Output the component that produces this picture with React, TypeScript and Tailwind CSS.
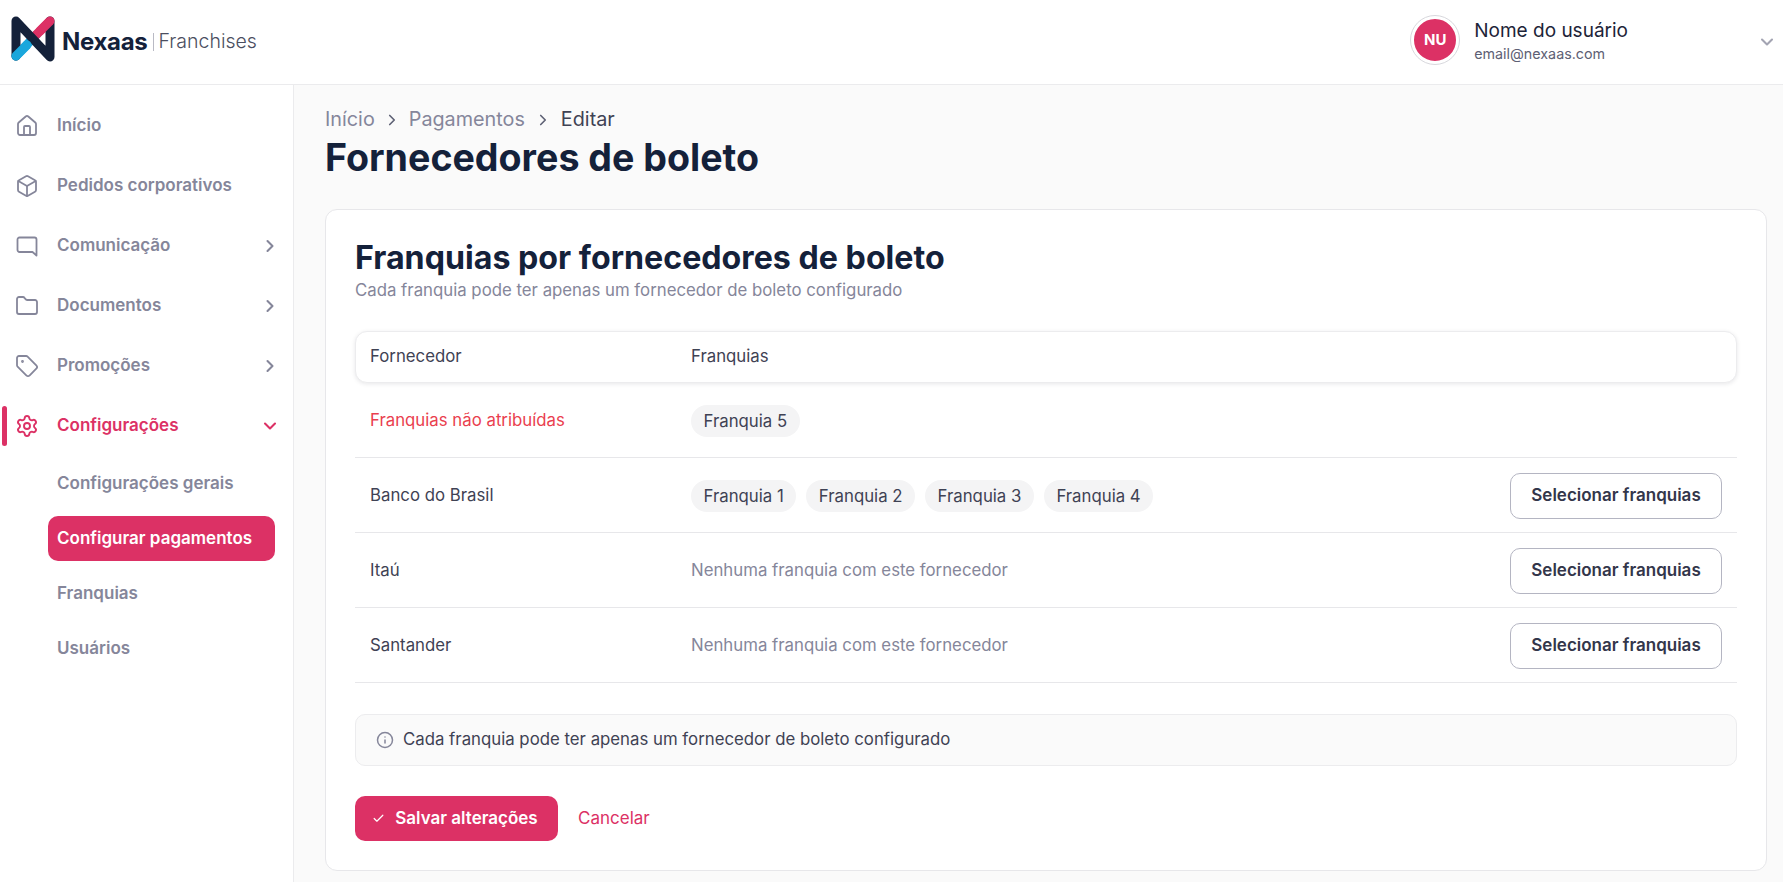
import { Box, Check, ChevronDown, ChevronRight, Folder, Home, Info, Settings, Tag } from "lucide-react";
import type { ReactNode } from "react";

function ChatIcon() {
  return (
    <svg width="24" height="24" viewBox="0 0 24 24" fill="none" stroke="currentColor" strokeWidth="1.8" strokeLinejoin="round">
      <path d="M4.5 3.5h15a2 2 0 0 1 2 2V21.5l-4-3.5h-13a2 2 0 0 1-2-2V5.5a2 2 0 0 1 2-2z" />
    </svg>
  );
}

const navItems = [
  { label: "Início", icon: <Home size={24} strokeWidth={1.8} /> },
  { label: "Pedidos corporativos", icon: <Box size={24} strokeWidth={1.8} /> },
  { label: "Comunicação", icon: <ChatIcon />, more: true },
  { label: "Documentos", icon: <Folder size={24} strokeWidth={1.8} />, more: true },
  { label: "Promoções", icon: <Tag size={24} strokeWidth={1.8} />, more: true },
];

const subItems = ["Configurações gerais", "Configurar pagamentos", "Franquias", "Usuários"];

function Logo() {
  return (
    <svg width="44" height="46" viewBox="0 0 44 46" className="mb-[6px] shrink-0">
      <path d="M5 40 L26 18" stroke="#1ba7dc" strokeWidth="9" strokeLinecap="round" fill="none" />
      <path d="M22 22 L38 6" stroke="#dc3165" strokeWidth="9" strokeLinecap="round" fill="none" />
      <path d="M5 40 V5 L39 41 V5" stroke="#14213a" strokeWidth="9" strokeLinejoin="round" strokeLinecap="round" fill="none" />
      <path d="M5 40 L16 29" stroke="#1ba7dc" strokeWidth="9" strokeLinecap="round" fill="none" />
      <path d="M39 5 L29 15" stroke="#dc3165" strokeWidth="9" strokeLinecap="round" fill="none" />
    </svg>
  );
}

function Chip({ children }: { children: ReactNode }) {
  return <span className="rounded-full bg-[#f4f4f5] px-[12.5px] py-[5px] text-[16.8px] leading-[22px] text-[#3f4254]">{children}</span>;
}

function SelectButton() {
  return (
    <button className="h-[46px] w-[212px] rounded-[10px] border border-[#b4b5c2] bg-white text-[17px] font-semibold text-[#33364a]">
      Selecionar franquias
    </button>
  );
}

function Row({ name, action, red, children }: { name: string; action?: boolean; red?: boolean; children: ReactNode }) {
  return (
    <div className="flex h-[75px] items-center border-b border-[#e7e7ea] px-[15px] pt-[2px]">
      <div className={`w-[321px] text-[16.8px] ${red ? "text-[#ea3f4f]" : "text-[#3f4254]"}`}>{name}</div>
      <div className="flex flex-1 items-center gap-[10px] text-[16.8px] text-[#85869a]">{children}</div>
      {action && <SelectButton />}
    </div>
  );
}

export default function App() {
  return (
    <div className="flex h-[882px] flex-col overflow-hidden bg-[#fafafa] font-['Inter',sans-serif]">
      <header className="flex h-[85px] shrink-0 items-center justify-between border-b border-[#ebebed] bg-white pl-[11px] pr-[6px]">
        <div className="flex items-center">
          <Logo />
          <span className="ml-[7px] text-[24px] font-bold tracking-[-0.3px] text-[#14213a]">Nexaas</span>
          <span className="mx-[5px] h-[18px] w-px bg-[#b9bac4]" />
          <span className="text-[19.5px] font-light text-[#4b4e60]">Franchises</span>
        </div>
        <div className="flex items-center">
          <div className="mb-[4px] flex h-[48px] w-[48px] items-center justify-center rounded-full border-[3px] border-white bg-[#dc3165] text-[15px] font-bold text-white outline outline-1 outline-[#d8d8dd]">
            NU
          </div>
          <div className="mb-[2px] ml-[15px] mr-[129px]">
            <div className="text-[19px] leading-[26px] text-[#1d2438]">Nome do usuário</div>
            <div className="text-[14.3px] leading-[20px] text-[#5d6074]">email@nexaas.com</div>
          </div>
          <ChevronDown size={20} strokeWidth={2.5} className="text-[#a3a4b2]" />
        </div>
      </header>

      <div className="flex min-h-0 flex-1">
        <aside className="w-[294px] shrink-0 border-r border-[#ebebed] bg-white pt-[11px]">
          {navItems.map((item) => (
            <div key={item.label} className="flex h-[60px] items-center pl-[15px] pr-[13px] text-[#85869a]">
              {item.icon}
              <span className="ml-[18px] flex-1 text-[17px] font-semibold">{item.label}</span>
              {item.more && <ChevronRight size={20} strokeWidth={2.5} />}
            </div>
          ))}
          <div className="relative flex h-[60px] items-center pl-[15px] pr-[13px] text-[#dc3165]">
            <span className="absolute left-[2px] top-[10px] h-[40px] w-[5px] rounded-full bg-[#dc3165]" />
            <Settings size={24} strokeWidth={1.9} />
            <span className="ml-[18px] flex-1 text-[17px] font-semibold">Configurações</span>
            <ChevronDown size={20} strokeWidth={2.5} />
          </div>
          <div className="pl-[48px] pr-[18px] pt-[5px]">
            {subItems.map((item, i) => (
              <div
                key={item}
                className={`mb-[10px] flex h-[45px] items-center rounded-[10px] px-[9px] text-[17px] font-semibold ${i === 1 ? "bg-[#dc3165] text-white" : "text-[#85869a]"}`}
              >
                {item}
              </div>
            ))}
          </div>
        </aside>

        <main className="min-w-0 flex-1 px-[31px] pt-[23px]">
          <nav className="flex h-[24px] items-center text-[19.8px] text-[#85869a]">
            <span>Início</span>
            <ChevronRight size={18} strokeWidth={2.2} className="mx-[8px] text-[#5d6074]" />
            <span>Pagamentos</span>
            <ChevronRight size={18} strokeWidth={2.2} className="ml-[9px] mr-[9px] text-[#5d6074]" />
            <span className="text-[#3f4254]">Editar</span>
          </nav>
          <h1 className="mt-[3px] text-[37.6px] font-bold leading-[46px] text-[#14213a]">Fornecedores de boleto</h1>

          <section className="mt-[28px] h-[662px] w-[1442px] rounded-[12px] border border-[#e7e7ea] bg-white px-[29px] pt-[28px]">
            <h2 className="text-[32.2px] font-bold leading-[40px] text-[#14213a]">Franquias por fornecedores de boleto</h2>
            <p className="text-[16.8px] leading-[24px] text-[#85869a]">Cada franquia pode ter apenas um fornecedor de boleto configurado</p>

            <div className="mt-[29px] flex h-[52px] items-center rounded-[12px] border border-[#ececee] bg-white px-[14px] text-[16.8px] text-[#3f4254] shadow-[0_1px_4px_rgba(20,20,40,0.1)]">
              <div className="w-[321px]">Fornecedor</div>
              <div>Franquias</div>
            </div>

            <Row name="Franquias não atribuídas" red>
              <Chip>Franquia 5</Chip>
            </Row>
            <Row name="Banco do Brasil" action>
              <Chip>Franquia 1</Chip>
              <Chip>Franquia 2</Chip>
              <Chip>Franquia 3</Chip>
              <Chip>Franquia 4</Chip>
            </Row>
            <Row name="Itaú" action>
              Nenhuma franquia com este fornecedor
            </Row>
            <Row name="Santander" action>
              Nenhuma franquia com este fornecedor
            </Row>

            <div className="mt-[31px] flex h-[52px] items-center rounded-[10px] border border-[#ececee] bg-[#fafafa] px-[20px] text-[16.8px] text-[#3f4254]">
              <Info size={18} strokeWidth={2} className="mr-[9px] text-[#85869a]" />
              Cada franquia pode ter apenas um fornecedor de boleto configurado
            </div>

            <div className="mt-[30px] flex items-center">
              <button className="flex h-[45px] w-[203px] items-center justify-center rounded-[10px] bg-[#dc3165] pr-[3px] text-[17px] font-semibold text-white">
                <Check size={13} strokeWidth={2.2} className="mr-[10px]" />
                Salvar alterações
              </button>
              <span className="ml-[20px] text-[17px] text-[#dc3165]">Cancelar</span>
            </div>
          </section>
        </main>
      </div>
    </div>
  );
}
